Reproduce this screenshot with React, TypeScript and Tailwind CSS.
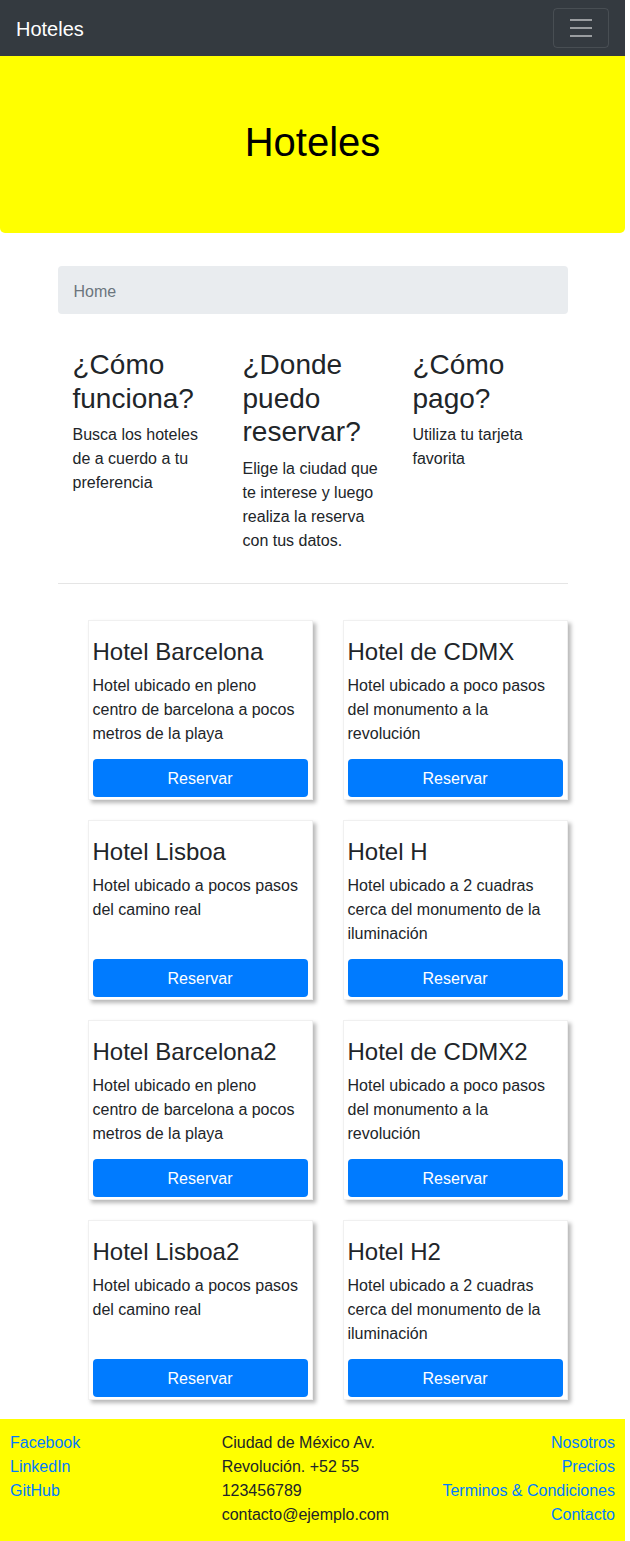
import React from "react";

const hotels = [
  { name: "Hotel Barcelona", text: "Hotel ubicado en pleno centro de barcelona a pocos metros de la playa" },
  { name: "Hotel de CDMX", text: "Hotel ubicado a poco pasos del monumento a la revolución" },
  { name: "Hotel Lisboa", text: "Hotel ubicado a pocos pasos del camino real" },
  { name: "Hotel H", text: "Hotel ubicado a 2 cuadras cerca del monumento de la iluminación" },
  { name: "Hotel Barcelona2", text: "Hotel ubicado en pleno centro de barcelona a pocos metros de la playa" },
  { name: "Hotel de CDMX2", text: "Hotel ubicado a poco pasos del monumento a la revolución" },
  { name: "Hotel Lisboa2", text: "Hotel ubicado a pocos pasos del camino real" },
  { name: "Hotel H2", text: "Hotel ubicado a 2 cuadras cerca del monumento de la iluminación" },
];

const info = [
  { title: "¿Cómo funciona?", text: "Busca los hoteles de a cuerdo a tu preferencia" },
  { title: "¿Donde puedo reservar?", text: "Elige la ciudad que te interese y luego realiza la reserva con tus datos." },
  { title: "¿Cómo pago?", text: "Utiliza tu tarjeta favorita" },
];

function HotelCard({ name, text }: { name: string; text: string }) {
  return (
    <div className="h-[180px] flex flex-col bg-white border border-[#f0f0f0] shadow-[3px_3px_4px_rgba(0,0,0,0.28)] px-[4px] pt-[5px] pb-[2px]">
      <h4 className="mt-[12px] mb-[7px] text-[24px] leading-[28.8px]">{name}</h4>
      <p className="pr-[8px]">{text}</p>
      <button className="mt-auto h-[38px] w-full rounded bg-[#007bff] text-white pt-[3px]">Reservar</button>
    </div>
  );
}

export default function App() {
  return (
    <div className="w-[625px] bg-white font-['Liberation_Sans',Arial,sans-serif] text-[16px] leading-6 text-[#212529]">
      {/* Navbar */}
      <nav className="h-14 bg-[#343a40] flex items-center justify-between px-4">
        <span className="text-white text-[20px] pt-[1px]">Hoteles</span>
        <button className="w-14 h-10 border border-white/10 rounded flex items-center justify-center">
          <svg width="30" height="30" viewBox="0 0 30 30">
            <path d="M4 7h22M4 15h22M4 23h22" stroke="rgba(255,255,255,0.5)" strokeWidth="2" strokeLinecap="butt" />
          </svg>
        </button>
      </nav>

      {/* Jumbotron */}
      <header className="h-[177px] bg-[#ffff00] rounded-b-[5px] flex items-center justify-center pb-[5px]">
        <h1 className="text-[40px] leading-[48px] text-black">Hoteles</h1>
      </header>

      <main className="w-[510px] mx-auto">
        <div className="mt-[33px] h-12 px-4 pt-[3px] bg-[#e9ecef] rounded flex items-center text-[#6c757d]">Home</div>

        <div className="grid grid-cols-3 mt-[34px]">
          {info.map((i) => (
            <div key={i.title} className="px-[15px]">
              <h3 className="text-[28px] leading-[33.6px] mb-2">{i.title}</h3>
              <p>{i.text}</p>
            </div>
          ))}
        </div>

        <hr className="mt-[30px] border-t border-black/10" />

        <div className="grid grid-cols-2 gap-x-[30px] gap-y-5 pl-[30px] mt-[36px]">
          {hotels.map((h) => (
            <HotelCard key={h.name} name={h.name} text={h.text} />
          ))}
        </div>
      </main>

      {/* Footer */}
      <footer className="mt-[19px] bg-[#ffff00] grid grid-cols-3 px-[10px] pt-[12px] pb-[14px]">
        <div className="flex flex-col items-start text-[#007bff]">
          <a>Facebook</a>
          <a>LinkedIn</a>
          <a>GitHub</a>
        </div>
        <div className="pl-[10px]">
          Ciudad de México Av. Revolución. +52 55 123456789 contacto@ejemplo.com
        </div>
        <div className="flex flex-col items-end text-[#007bff]">
          <a>Nosotros</a>
          <a>Precios</a>
          <a>Terminos &amp; Condiciones</a>
          <a>Contacto</a>
        </div>
      </footer>
    </div>
  );
}
